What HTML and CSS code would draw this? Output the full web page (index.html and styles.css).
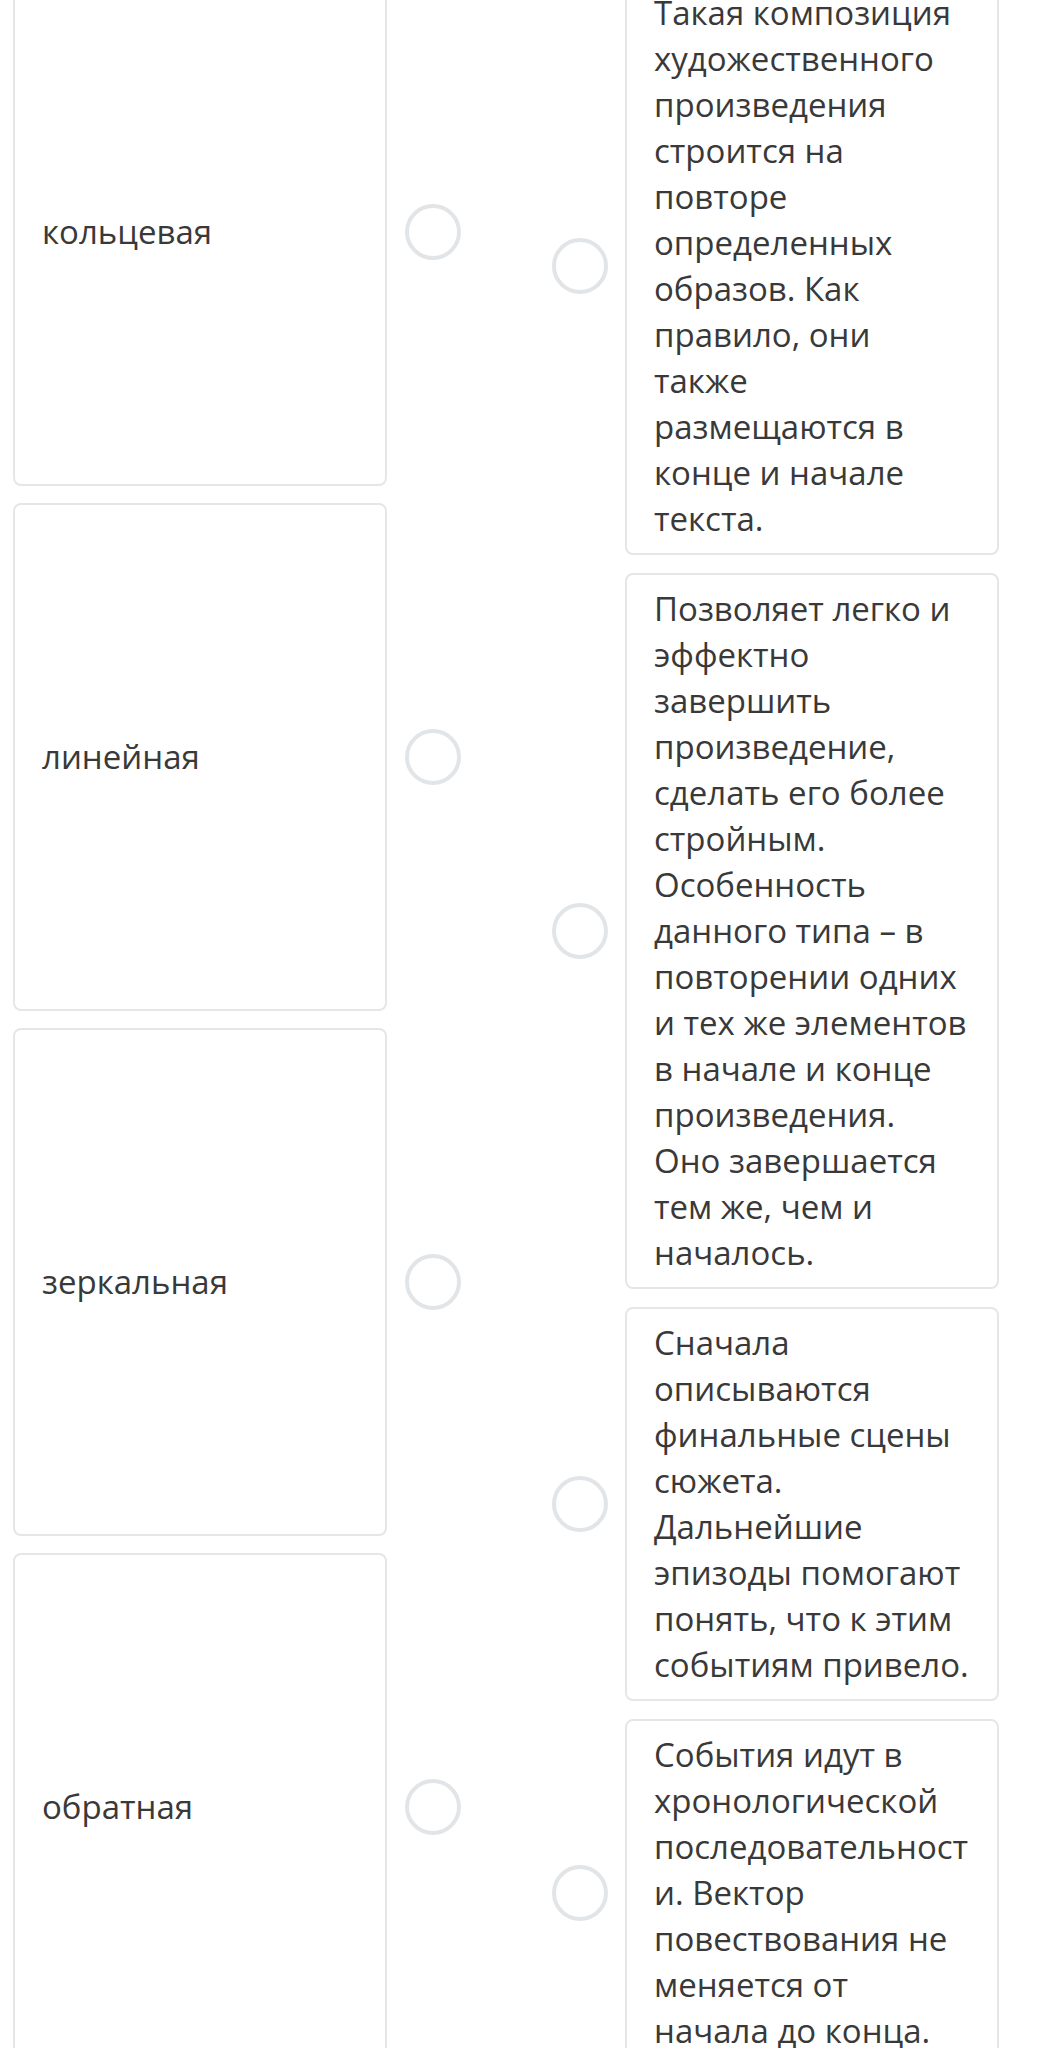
FILE: index.html
```html
<!DOCTYPE html>
<html lang="ru">
<head>
  <meta charset="UTF-8" />
  <title>Сопоставление</title>
  <link rel="stylesheet" href="styles.css">
</head>
<body>
  <div class="match">
    <div class="col col-left">
      <div class="row">
        <div class="card term">кольцевая</div>
        <span class="dot"></span>
      </div>
      <div class="row">
        <div class="card term">линейная</div>
        <span class="dot"></span>
      </div>
      <div class="row">
        <div class="card term">зеркальная</div>
        <span class="dot"></span>
      </div>
      <div class="row">
        <div class="card term">обратная</div>
        <span class="dot"></span>
      </div>
    </div>

    <div class="col col-right">
      <div class="row">
        <span class="dot"></span>
        <div class="card def">Такая композиция художественного произведения строится на повторе определенных образов. Как правило, они также размещаются в конце и начале текста.</div>
      </div>
      <div class="row">
        <span class="dot"></span>
        <div class="card def">Позволяет легко и эффектно завершить произведение, сделать его более стройным. Особенность данного типа – в повторении одних и тех же элементов в начале и конце произведения. Оно завершается тем же, чем и началось.</div>
      </div>
      <div class="row">
        <span class="dot"></span>
        <div class="card def">Сначала описываются финальные сцены сюжета. Дальнейшие эпизоды помогают понять, что к этим событиям привело.</div>
      </div>
      <div class="row">
        <span class="dot"></span>
        <div class="card def">События идут в хронологической последовательности. Вектор повествования не меняется от начала до конца.</div>
      </div>
    </div>
  </div>
</body>
</html>
```

FILE: styles.css
```css
body {
  font-family: 'Open Sans', 'Noto Sans', sans-serif;
  background-color: #fff;
  margin: 0;
  color: #393939;
}
.match {
  display: flex;
  align-items: flex-start;
  gap: 92px;
  padding-left: 13px;
  margin-top: -22px;
}
.col {
  width: 447px;
  display: flex;
  flex-direction: column;
  gap: 17px;
}
.row {
  display: flex;
  align-items: center;
  gap: 18px;
}
.card {
  box-sizing: border-box;
  width: 374px;
  flex-shrink: 0;
  border: 2px solid #e6e6e6;
  border-radius: 8px;
  padding: 11px 27px;
  font-size: 33px;
  line-height: 46px;
  overflow-wrap: break-word;
}
.term {
  height: 508px;
  display: flex;
  align-items: center;
}
.dot {
  box-sizing: border-box;
  width: 56px;
  height: 56px;
  flex-shrink: 0;
  border: 4px solid #e2e5e8;
  border-radius: 50%;
}
.col-right {
  margin-top: -1px;
  gap: 18px;
}
.col-right .row {
  gap: 17px;
}
```
